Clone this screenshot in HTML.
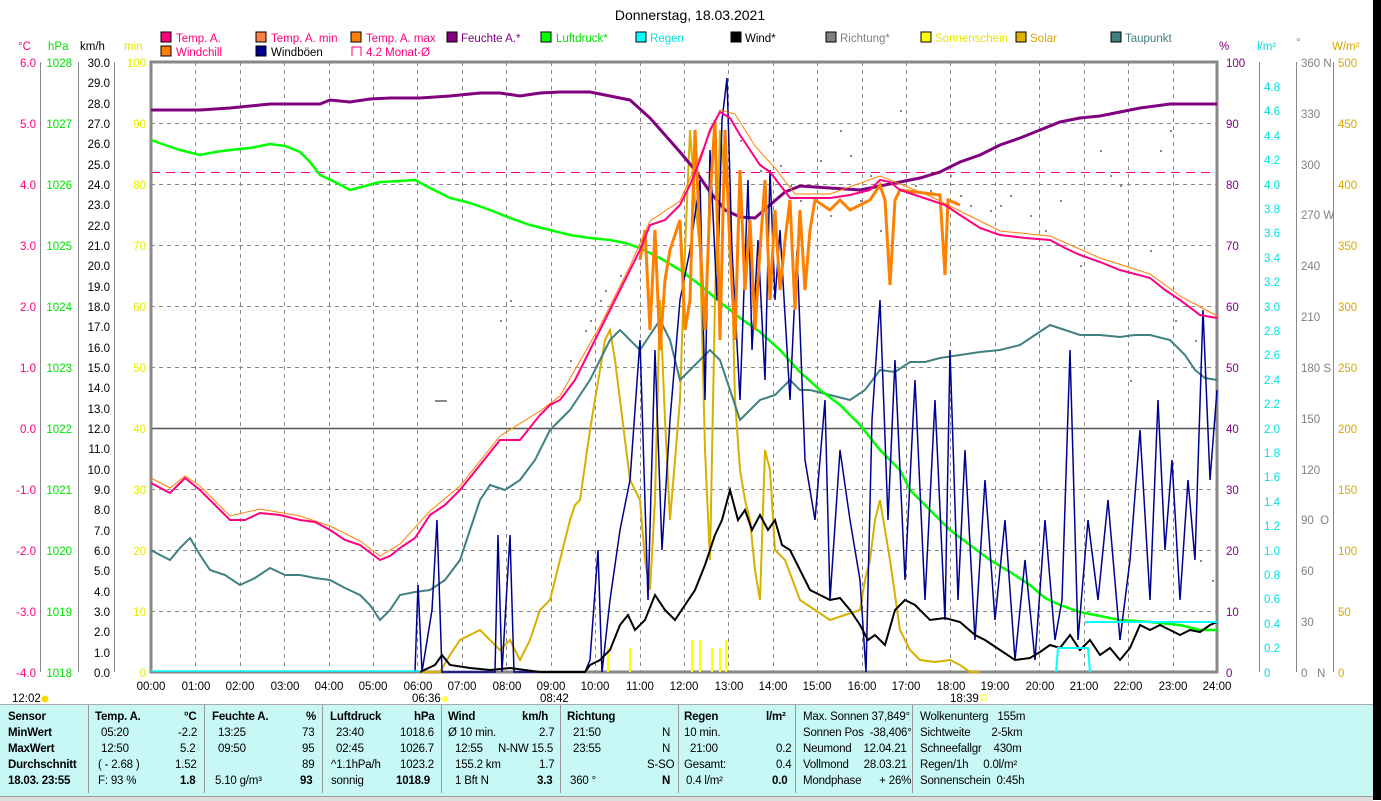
<!DOCTYPE html>
<html><head><meta charset="utf-8"><style>
body{margin:0;width:1381px;height:800px;overflow:hidden;background:#fff;font-family:"Liberation Sans",sans-serif;font-size:11px;}
.t{position:absolute;white-space:nowrap;font-size:11.5px;letter-spacing:-0.2px}
.b{font-weight:bold}
#tbl{position:absolute;left:0;top:704px;width:1373px;height:93px;background:#c8f8f6;border-top:1px solid #aaa}
.sep{position:absolute;top:705px;width:1px;height:88px;background:#999}
</style></head><body>
<svg width="1381" height="800" style="position:absolute;left:0;top:0" font-family="Liberation Sans, sans-serif" font-size="11.5">
<rect x="1373" y="0" width="8" height="800" fill="#000"/>
<text x="690" y="20" text-anchor="middle" font-size="14">Donnerstag, 18.03.2021</text>
<g font-size="11.5">
<rect x="161" y="32" width="10" height="10" fill="#ff0080" stroke="#000"/><text x="176" y="42" fill="#ff0080">Temp. A.</text>
<rect x="256" y="32" width="10" height="10" fill="#ff8040" stroke="#000"/><text x="271" y="42" fill="#ff0080">Temp. A. min</text>
<rect x="351" y="32" width="10" height="10" fill="#ff8000" stroke="#000"/><text x="366" y="42" fill="#ff0080">Temp. A. max</text>
<rect x="447" y="32" width="10" height="10" fill="#800080" stroke="#000"/><text x="461" y="42" fill="#800080">Feuchte A.*</text>
<rect x="541" y="32" width="10" height="10" fill="#00ff00" stroke="#000"/><text x="556" y="42" fill="#00e000">Luftdruck*</text>
<rect x="636" y="32" width="10" height="10" fill="#00ffff" stroke="#000"/><text x="650" y="42" fill="#00e0e0">Regen</text>
<rect x="731" y="32" width="10" height="10" fill="#000" stroke="#000"/><text x="745" y="42">Wind*</text>
<rect x="826" y="32" width="10" height="10" fill="#808080" stroke="#000"/><text x="840" y="42" fill="#808080">Richtung*</text>
<rect x="921" y="32" width="10" height="10" fill="#ffff00" stroke="#000"/><text x="935" y="42" fill="#e8e800">Sonnenschein</text>
<rect x="1016" y="32" width="10" height="10" fill="#e0b000" stroke="#000"/><text x="1030" y="42" fill="#d8a800">Solar</text>
<rect x="1111" y="32" width="10" height="10" fill="#408080" stroke="#000"/><text x="1125" y="42" fill="#408080">Taupunkt</text>
<rect x="161" y="46" width="10" height="10" fill="#ff8000" stroke="#000"/><text x="176" y="56" fill="#ff0080">Windchill</text>
<rect x="256" y="46" width="10" height="10" fill="#000090" stroke="#000"/><text x="271" y="56">Windböen</text>
<path d="M352 56V47H361V56" fill="none" stroke="#ff0080"/><text x="366" y="56" fill="#ff0080">4.2 Monat-Ø</text>
</g>
<text x="18" y="50" fill="#ff0080">°C</text><text x="48" y="50" fill="#00e000">hPa</text><text x="80" y="50">km/h</text><text x="124" y="50" fill="#e8e800">min</text>
<text x="1219" y="50" fill="#800080">%</text><text x="1257" y="50" fill="#00e0e0">l/m²</text><text x="1296" y="46" fill="#808080">°</text><text x="1332" y="50" fill="#d8a800">W/m²</text>
<g stroke="#888" stroke-dasharray="4,4" stroke-width="1">
<path d="M195.5 62V672M240.5 62V672M284.5 62V672M329.5 62V672M373.5 62V672M417.5 62V672M462.5 62V672M506.5 62V672M551.5 62V672M595.5 62V672M640.5 62V672M684.5 62V672M728.5 62V672M773.5 62V672M817.5 62V672M862.5 62V672M906.5 62V672M950.5 62V672M995.5 62V672M1039.5 62V672M1084.5 62V672M1128.5 62V672M1173.5 62V672"/>
<path d="M151 123.5H1217M151 184.5H1217M151 245.5H1217M151 306.5H1217M151 367.5H1217M151 489.5H1217M151 550.5H1217M151 611.5H1217"/>
</g>
<path d="M151 428.5H1217" stroke="#555" stroke-width="1.5"/>
<path d="M151 172.5H1217" stroke="#ff0080" stroke-dasharray="9,6"/>
<rect x="151" y="62" width="1066" height="610" fill="none" stroke="#888" stroke-width="3"/>
<g stroke="#888" fill="none">
<path d="M40.5 62V672M78.5 62V672M114.5 62V672M1259.5 62V672M1296.5 62V672M1333.5 62V672"/>
</g>
<g font-size="11.5" text-anchor="end">
<g fill="#ff0080"><text x="36" y="67">6.0</text><text x="36" y="128">5.0</text><text x="36" y="189">4.0</text><text x="36" y="250">3.0</text><text x="36" y="311">2.0</text><text x="36" y="372">1.0</text><text x="36" y="433">0.0</text><text x="36" y="494">-1.0</text><text x="36" y="555">-2.0</text><text x="36" y="616">-3.0</text><text x="36" y="677">-4.0</text></g>
<g fill="#00e000"><text x="72" y="67">1028</text><text x="72" y="128">1027</text><text x="72" y="189">1026</text><text x="72" y="250">1025</text><text x="72" y="311">1024</text><text x="72" y="372">1023</text><text x="72" y="433">1022</text><text x="72" y="494">1021</text><text x="72" y="555">1020</text><text x="72" y="616">1019</text><text x="72" y="677">1018</text></g>
<g fill="#000"><text x="110" y="67">30.0</text><text x="110" y="87">29.0</text><text x="110" y="108">28.0</text><text x="110" y="128">27.0</text><text x="110" y="148">26.0</text><text x="110" y="169">25.0</text><text x="110" y="189">24.0</text><text x="110" y="209">23.0</text><text x="110" y="230">22.0</text><text x="110" y="250">21.0</text><text x="110" y="270">20.0</text><text x="110" y="291">19.0</text><text x="110" y="311">18.0</text><text x="110" y="331">17.0</text><text x="110" y="352">16.0</text><text x="110" y="372">15.0</text><text x="110" y="392">14.0</text><text x="110" y="413">13.0</text><text x="110" y="433">12.0</text><text x="110" y="453">11.0</text><text x="110" y="474">10.0</text><text x="110" y="494">9.0</text><text x="110" y="514">8.0</text><text x="110" y="535">7.0</text><text x="110" y="555">6.0</text><text x="110" y="575">5.0</text><text x="110" y="596">4.0</text><text x="110" y="616">3.0</text><text x="110" y="636">2.0</text><text x="110" y="657">1.0</text><text x="110" y="677">0.0</text></g>
<g fill="#e8e800"><text x="146" y="67">100</text><text x="146" y="128">90</text><text x="146" y="189">80</text><text x="146" y="250">70</text><text x="146" y="311">60</text><text x="146" y="372">50</text><text x="146" y="433">40</text><text x="146" y="494">30</text><text x="146" y="555">20</text><text x="146" y="616">10</text><text x="146" y="677">0</text></g>
</g>
<g font-size="11.5">
<g fill="#800080"><text x="1226" y="67">100</text><text x="1226" y="128">90</text><text x="1226" y="189">80</text><text x="1226" y="250">70</text><text x="1226" y="311">60</text><text x="1226" y="372">50</text><text x="1226" y="433">40</text><text x="1226" y="494">30</text><text x="1226" y="555">20</text><text x="1226" y="616">10</text><text x="1226" y="677">0</text></g>
<g fill="#00e0e0"><text x="1264" y="91">4.8</text><text x="1264" y="115">4.6</text><text x="1264" y="140">4.4</text><text x="1264" y="164">4.2</text><text x="1264" y="189">4.0</text><text x="1264" y="213">3.8</text><text x="1264" y="237">3.6</text><text x="1264" y="262">3.4</text><text x="1264" y="286">3.2</text><text x="1264" y="311">3.0</text><text x="1264" y="335">2.8</text><text x="1264" y="359">2.6</text><text x="1264" y="384">2.4</text><text x="1264" y="408">2.2</text><text x="1264" y="433">2.0</text><text x="1264" y="457">1.8</text><text x="1264" y="481">1.6</text><text x="1264" y="506">1.4</text><text x="1264" y="530">1.2</text><text x="1264" y="555">1.0</text><text x="1264" y="579">0.8</text><text x="1264" y="603">0.6</text><text x="1264" y="628">0.4</text><text x="1264" y="652">0.2</text><text x="1264" y="677">0</text></g>
<g fill="#808080"><text x="1301" y="67">360 N</text><text x="1301" y="118">330</text><text x="1301" y="169">300</text><text x="1301" y="219">270 W</text><text x="1301" y="270">240</text><text x="1301" y="321">210</text><text x="1301" y="372">180 S</text><text x="1301" y="423">150</text><text x="1301" y="474">120</text><text x="1301" y="524">90&#160; O</text><text x="1301" y="575">60</text><text x="1301" y="626">30</text><text x="1301" y="677">0&#160;&#160; N</text></g>
<g fill="#d8a800"><text x="1338" y="67">500</text><text x="1338" y="128">450</text><text x="1338" y="189">400</text><text x="1338" y="250">350</text><text x="1338" y="311">300</text><text x="1338" y="372">250</text><text x="1338" y="433">200</text><text x="1338" y="494">150</text><text x="1338" y="555">100</text><text x="1338" y="616">50</text><text x="1338" y="677">0</text></g>
</g>
<g font-size="11.5" text-anchor="middle">
<text x="151" y="690">00:00</text><text x="196" y="690">01:00</text><text x="240" y="690">02:00</text><text x="285" y="690">03:00</text><text x="329" y="690">04:00</text><text x="373" y="690">05:00</text><text x="418" y="690">06:00</text><text x="462" y="690">07:00</text><text x="507" y="690">08:00</text><text x="551" y="690">09:00</text><text x="595" y="690">10:00</text><text x="640" y="690">11:00</text><text x="684" y="690">12:00</text><text x="729" y="690">13:00</text><text x="773" y="690">14:00</text><text x="817" y="690">15:00</text><text x="862" y="690">16:00</text><text x="906" y="690">17:00</text><text x="951" y="690">18:00</text><text x="995" y="690">19:00</text><text x="1040" y="690">20:00</text><text x="1084" y="690">21:00</text><text x="1128" y="690">22:00</text><text x="1173" y="690">23:00</text><text x="1217" y="690">24:00</text>
</g>
<g font-size="11.5"><text x="12" y="702">12:02</text><circle cx="45" cy="699" r="3.5" fill="#ffd800"/><text x="412" y="702">06:36</text><circle cx="445" cy="699" r="3" fill="#ffff40"/><text x="540" y="702">08:42</text><text x="950" y="702">18:39</text><rect x="981" y="695" width="5" height="5" fill="none" stroke="#ffff00"/></g>
<g fill="#888">
<rect x="605" y="290" width="2" height="2"/><rect x="620" y="275" width="2" height="2"/><rect x="590" y="320" width="2" height="2"/><rect x="585" y="330" width="2" height="2"/><rect x="500" y="320" width="2" height="2"/><rect x="510" y="300" width="2" height="2"/><rect x="435" y="400" width="12" height="2"/><rect x="740" y="140" width="2" height="2"/><rect x="760" y="170" width="2" height="2"/><rect x="780" y="165" width="2" height="2"/><rect x="820" y="160" width="2" height="2"/><rect x="840" y="130" width="2" height="2"/><rect x="850" y="155" width="2" height="2"/><rect x="860" y="200" width="2" height="2"/><rect x="880" y="230" width="2" height="2"/><rect x="900" y="110" width="2" height="2"/><rect x="930" y="190" width="2" height="2"/><rect x="950" y="175" width="2" height="2"/><rect x="970" y="205" width="2" height="2"/><rect x="990" y="210" width="2" height="2"/><rect x="1010" y="195" width="2" height="2"/><rect x="1030" y="215" width="2" height="2"/><rect x="1060" y="200" width="2" height="2"/><rect x="1080" y="265" width="2" height="2"/><rect x="1100" y="150" width="2" height="2"/><rect x="1120" y="185" width="2" height="2"/><rect x="1150" y="250" width="2" height="2"/><rect x="1170" y="130" width="2" height="2"/><rect x="1175" y="320" width="2" height="2"/><rect x="1195" y="340" width="2" height="2"/><rect x="1200" y="560" width="2" height="2"/><rect x="1212" y="580" width="2" height="2"/><rect x="1130" y="380" width="2" height="2"/><rect x="800" y="200" width="2" height="2"/><rect x="830" y="215" width="2" height="2"/><rect x="770" y="140" width="2" height="2"/><rect x="790" y="185" width="2" height="2"/><rect x="870" y="175" width="2" height="2"/><rect x="915" y="185" width="2" height="2"/><rect x="960" y="195" width="2" height="2"/><rect x="1000" y="205" width="2" height="2"/><rect x="1045" y="230" width="2" height="2"/><rect x="1110" y="175" width="2" height="2"/><rect x="1160" y="150" width="2" height="2"/><rect x="640" y="255" width="2" height="2"/><rect x="570" y="360" width="2" height="2"/><rect x="600" y="300" width="2" height="2"/></g>
<polyline fill="none" stroke="#d8b000" stroke-width="2" points="420,672 440,672 450,655 460,640 470,635 480,630 490,640 500,650 510,640 520,660 530,640 540,610 550,600 560,560 570,520 575,505 580,500 590,430 600,370 605,340 610,330 615,360 620,400 630,480 640,500 645,560 650,590 655,500 660,300 665,420 670,520 680,400 685,250 690,130 695,200 700,250 705,450 710,560 715,300 720,130 725,180 730,200 735,400 740,470 745,500 750,520 755,570 760,600 765,450 770,470 775,550 785,560 800,600 815,610 830,620 845,615 860,610 865,580 870,560 875,520 880,500 885,530 890,560 900,630 910,650 920,660 935,662 950,660 960,665 970,672 980,672"/>
<g stroke="#ffff00" stroke-width="2"><path d="M608 672V648M630 672V648M692 672V640M700 672V640M712 672V648M720 672V648M726 672V640"/></g>
<polyline fill="none" stroke="#408080" stroke-width="2" points="151,550 160,555 170,560 180,548 190,538 200,555 210,570 225,575 240,585 255,578 270,568 285,575 300,575 315,578 330,580 345,588 360,595 370,605 380,620 390,610 400,595 415,592 430,590 445,580 460,560 470,530 480,500 490,485 505,490 520,480 535,460 550,430 560,420 570,410 580,395 590,380 600,360 610,340 620,330 630,340 640,350 650,335 660,320 670,340 680,380 690,370 700,360 710,350 720,360 730,390 740,420 750,410 760,400 775,395 790,380 800,390 810,390 830,395 850,400 865,390 880,370 895,372 910,362 925,362 940,358 960,355 980,352 1000,350 1020,345 1035,335 1050,325 1065,330 1080,335 1100,335 1120,337 1135,335 1150,335 1170,340 1185,355 1195,370 1205,378 1217,380"/>
<polyline fill="none" stroke="#800080" stroke-width="3" points="151,110 200,110 230,108 270,104 320,104 330,100 350,102 370,99 390,98 420,98 450,96 480,93 500,93 520,96 540,93 560,92 590,92 610,96 630,100 650,118 665,135 680,152 695,170 710,192 725,210 740,217 755,218 770,205 785,192 800,186 830,188 860,190 880,186 900,182 920,178 940,172 960,162 980,155 1000,145 1020,138 1040,130 1060,122 1080,118 1100,116 1120,112 1140,108 1170,104 1217,104"/>
<polyline fill="none" stroke="#00ff00" stroke-width="2.5" points="151,140 165,145 180,150 200,155 215,152 230,150 250,148 270,144 285,146 300,152 310,162 320,175 335,182 350,190 365,186 380,182 400,181 415,180 430,188 450,198 470,203 490,210 510,218 530,225 550,230 570,235 590,238 610,240 625,243 640,248 660,258 680,270 700,285 720,302 740,318 760,332 780,350 800,372 820,390 840,405 860,425 880,450 900,470 910,490 930,510 950,530 970,545 990,560 1010,572 1030,585 1045,598 1060,605 1080,612 1100,616 1120,620 1150,622 1180,625 1200,630 1217,630"/>
<polyline fill="none" stroke="#000090" stroke-width="1.5" points="415,672 418,585 422,672 432,610 437,520 442,672 495,672 498,535 502,672 510,535 514,672 585,672 590,660 598,550 602,672 610,600 620,530 630,480 640,340 648,600 655,350 662,550 670,420 680,300 690,250 700,180 705,400 710,150 717,300 722,120 727,78 732,250 740,400 748,180 752,350 758,240 765,380 770,170 775,300 780,230 790,400 797,250 805,460 815,520 825,400 830,600 840,450 850,520 860,580 866,672 872,420 880,300 888,520 895,360 905,580 915,380 925,600 935,400 945,620 950,350 958,600 965,450 975,640 985,480 995,620 1005,520 1015,660 1025,560 1035,660 1045,520 1055,640 1062,600 1070,350 1078,640 1088,520 1098,600 1108,500 1120,640 1130,560 1140,430 1150,600 1158,400 1165,550 1172,460 1180,600 1188,480 1195,560 1203,310 1210,480 1217,390"/>
<polyline fill="none" stroke="#ff8000" stroke-width="3" points="640,260 645,230 650,330 655,230 660,350 665,280 670,250 680,220 685,330 690,300 695,130 700,240 705,330 710,200 715,120 720,340 725,130 730,250 735,340 740,170 745,290 750,220 755,330 760,250 765,180 770,300 775,210 780,290 785,240 790,200 795,310 800,210 805,290 810,230 815,200 830,210 840,200 850,210 860,205 870,200 880,185 885,200 890,285 895,200 900,190 940,195 945,275 948,200 960,205"/>
<polyline fill="none" stroke="#ff8000" stroke-width="1" points="151,478 170,488 185,476 200,486 230,516 260,509 300,516 330,526 360,541 380,556 400,544 430,511 460,486 500,436 540,411 560,396 600,326 630,266 650,221 680,201 700,156 720,110 735,114 755,146 775,168 795,194 830,194 880,176 930,196 960,211 1000,231 1050,236 1100,258 1150,274 1180,296 1217,316"/>
<polyline fill="none" stroke="#ff0080" stroke-width="2" points="151,483 170,493 185,478 200,490 215,505 230,520 245,520 260,513 280,515 300,520 315,522 330,530 345,540 360,545 380,560 390,556 400,548 415,538 430,515 445,505 460,490 480,465 500,440 520,440 540,415 550,405 560,400 575,380 590,350 600,330 615,300 630,270 640,250 650,225 665,220 680,205 690,185 700,160 710,130 720,112 730,118 740,135 750,150 760,165 770,172 780,185 790,198 810,198 830,198 850,195 870,190 880,180 890,182 900,190 915,195 930,200 945,205 960,215 980,228 1000,235 1025,238 1050,240 1065,248 1080,255 1100,262 1120,270 1150,278 1165,290 1180,300 1200,315 1217,318"/>
<polyline fill="none" stroke="#000" stroke-width="2" points="420,672 435,665 442,655 450,665 470,668 490,670 510,668 540,672 585,672 590,665 600,660 610,650 620,625 628,615 635,630 645,620 655,595 665,610 675,620 685,605 695,590 705,565 715,535 722,520 730,490 738,520 745,510 752,530 760,515 768,530 775,520 782,545 790,550 800,570 810,590 820,595 830,600 840,598 850,610 860,625 868,640 875,635 885,645 895,610 905,600 915,605 930,620 945,618 960,622 975,635 985,640 1000,650 1015,660 1030,658 1040,652 1050,645 1060,648 1070,635 1080,650 1090,640 1100,655 1110,648 1120,660 1130,648 1140,625 1150,630 1160,625 1170,630 1180,635 1190,630 1200,632 1210,625 1217,622"/>
<polyline fill="none" stroke="#00ffff" stroke-width="2" points="1056,672 1058,648 1088,648 1090,672"/>
<polyline fill="none" stroke="#00ffff" stroke-width="2" points="1085,622 1217,622"/>
<path d="M151 671H420" stroke="#00ffff" stroke-width="1.5"/>
</svg>
<div id="tbl"></div>
<div class="sep" style="left:88px"></div><div class="sep" style="left:204px"></div><div class="sep" style="left:322px"></div><div class="sep" style="left:441px"></div><div class="sep" style="left:560px"></div><div class="sep" style="left:678px"></div><div class="sep" style="left:795px"></div><div class="sep" style="left:912px"></div>
<div class="t b" style="left:8px;top:711px">Sensor</div><div class="t b" style="left:8px;top:727px">MinWert</div><div class="t b" style="left:8px;top:743px">MaxWert</div><div class="t b" style="left:8px;top:759px">Durchschnitt</div><div class="t b" style="left:8px;top:775px">18.03. 23:55</div>
<div class="t b" style="left:95px;top:711px">Temp. A.</div><div class="t b" style="left:184px;top:711px">°C</div>
<div class="t" style="left:101px;top:727px">05:20</div><div class="t" style="left:178px;top:727px">-2.2</div>
<div class="t" style="left:101px;top:743px">12:50</div><div class="t" style="left:180px;top:743px">5.2</div>
<div class="t" style="left:98px;top:759px">( - 2.68 )</div><div class="t" style="left:175px;top:759px">1.52</div>
<div class="t" style="left:98px;top:775px">F: 93 %</div><div class="t b" style="left:180px;top:775px">1.8</div>
<div class="t b" style="left:212px;top:711px">Feuchte A.</div><div class="t b" style="left:306px;top:711px">%</div>
<div class="t" style="left:218px;top:727px">13:25</div><div class="t" style="left:302px;top:727px">73</div>
<div class="t" style="left:218px;top:743px">09:50</div><div class="t" style="left:302px;top:743px">95</div>
<div class="t" style="left:302px;top:759px">89</div>
<div class="t" style="left:215px;top:775px">5.10 g/m³</div><div class="t b" style="left:300px;top:775px">93</div>
<div class="t b" style="left:330px;top:711px">Luftdruck</div><div class="t b" style="left:414px;top:711px">hPa</div>
<div class="t" style="left:336px;top:727px">23:40</div><div class="t" style="left:400px;top:727px">1018.6</div>
<div class="t" style="left:336px;top:743px">02:45</div><div class="t" style="left:400px;top:743px">1026.7</div>
<div class="t" style="left:331px;top:759px">^1.1hPa/h</div><div class="t" style="left:400px;top:759px">1023.2</div>
<div class="t" style="left:331px;top:775px">sonnig</div><div class="t b" style="left:396px;top:775px">1018.9</div>
<div class="t b" style="left:448px;top:711px">Wind</div><div class="t b" style="left:522px;top:711px">km/h</div>
<div class="t" style="left:448px;top:727px">Ø 10 min.</div><div class="t" style="left:539px;top:727px">2.7</div>
<div class="t" style="left:455px;top:743px">12:55</div><div class="t" style="left:498px;top:743px">N-NW 15.5</div>
<div class="t" style="left:455px;top:759px">155.2 km</div><div class="t" style="left:539px;top:759px">1.7</div>
<div class="t" style="left:455px;top:775px">1 Bft N</div><div class="t b" style="left:537px;top:775px">3.3</div>
<div class="t b" style="left:567px;top:711px">Richtung</div>
<div class="t" style="left:573px;top:727px">21:50</div><div class="t" style="left:662px;top:727px">N</div>
<div class="t" style="left:573px;top:743px">23:55</div><div class="t" style="left:662px;top:743px">N</div>
<div class="t" style="left:647px;top:759px">S-SO</div>
<div class="t" style="left:570px;top:775px">360 °</div><div class="t b" style="left:662px;top:775px">N</div>
<div class="t b" style="left:684px;top:711px">Regen</div><div class="t b" style="left:766px;top:711px">l/m²</div>
<div class="t" style="left:684px;top:727px">10 min.</div>
<div class="t" style="left:690px;top:743px">21:00</div><div class="t" style="left:776px;top:743px">0.2</div>
<div class="t" style="left:684px;top:759px">Gesamt:</div><div class="t" style="left:776px;top:759px">0.4</div>
<div class="t" style="left:686px;top:775px">0.4 l/m²</div><div class="t b" style="left:772px;top:775px">0.0</div>
<div class="t" style="left:803px;top:711px">Max. Sonnen 37,849°</div>
<div class="t" style="left:803px;top:727px">Sonnen Pos&#160; -38,406°</div>
<div class="t" style="left:803px;top:743px">Neumond&#160;&#160;&#160; 12.04.21</div>
<div class="t" style="left:803px;top:759px">Vollmond&#160;&#160;&#160;&#160; 28.03.21</div>
<div class="t" style="left:803px;top:775px">Mondphase&#160;&#160;&#160;&#160;&#160; + 26%</div>
<div class="t" style="left:920px;top:711px">Wolkenunterg&#160;&#160; 155m</div>
<div class="t" style="left:920px;top:727px">Sichtweite&#160;&#160;&#160;&#160;&#160;&#160; 2-5km</div>
<div class="t" style="left:920px;top:743px">Schneefallgr&#160;&#160;&#160; 430m</div>
<div class="t" style="left:920px;top:759px">Regen/1h&#160;&#160;&#160;&#160; 0.0l/m²</div>
<div class="t" style="left:920px;top:775px">Sonnenschein&#160; 0:45h</div>
<div style="position:absolute;left:0;top:796px;width:1373px;height:4px;background:#ddd;border-top:1px solid #999"></div>
</body></html>
